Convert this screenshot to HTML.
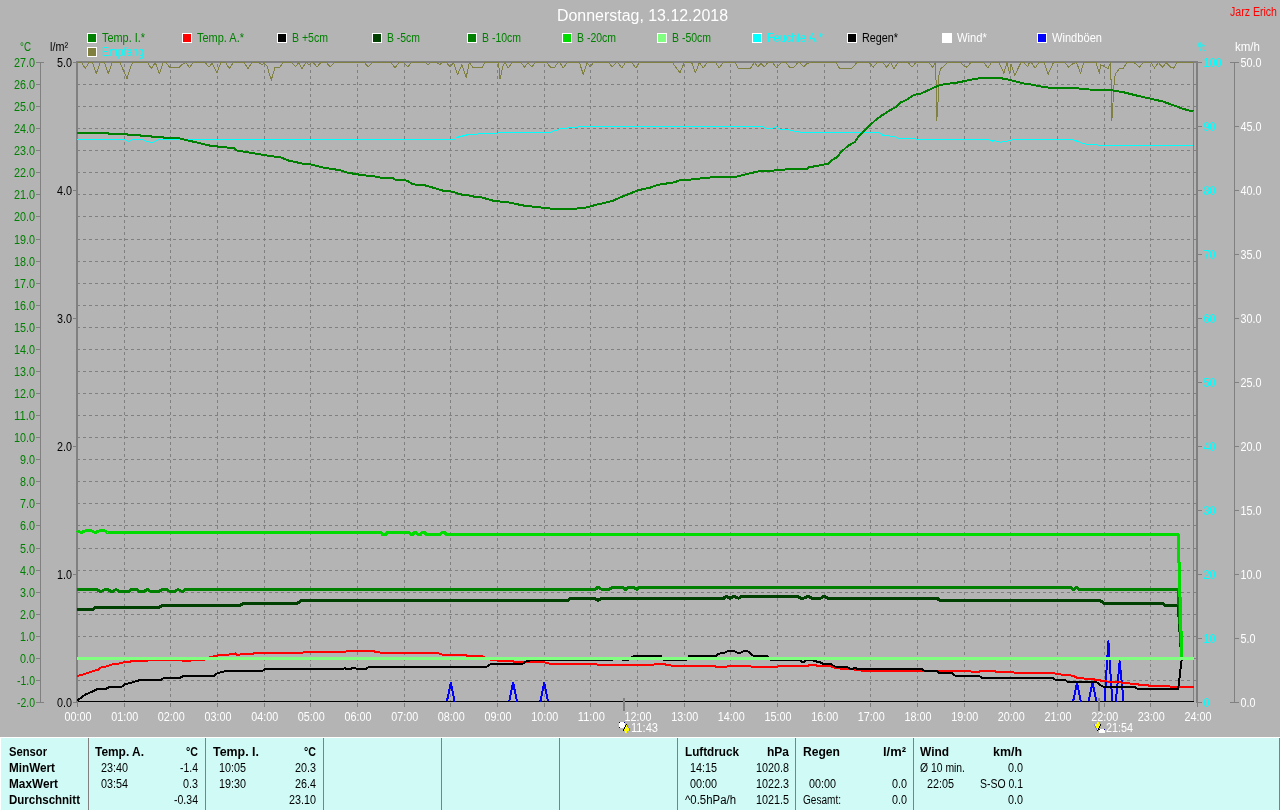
<!DOCTYPE html>
<html lang="de"><head><meta charset="utf-8"><title>Donnerstag, 13.12.2018</title>
<style>html,body{margin:0;padding:0;background:#b4b4b4;overflow:hidden}svg{display:block;will-change:transform}text{font-family:"Liberation Sans",sans-serif;font-size:12px}</style>
</head><body>
<svg width="1280" height="810" viewBox="0 0 1280 810">
<rect x="0" y="0" width="1280" height="810" fill="#b4b4b4"/>
<text x="557" y="21" fill="#ffffff" textLength="171" lengthAdjust="spacingAndGlyphs" style="font-size:16px">Donnerstag, 13.12.2018</text>
<text x="1230" y="16" fill="#ff0000" textLength="47" lengthAdjust="spacingAndGlyphs">Jarz Erich</text>
<g shape-rendering="crispEdges">
<rect x="87" y="33" width="10" height="10" fill="#ffffff"/>
<rect x="88" y="34" width="8" height="8" fill="#008000"/>
<rect x="182" y="33" width="10" height="10" fill="#ffffff"/>
<rect x="183" y="34" width="8" height="8" fill="#ff0000"/>
<rect x="277" y="33" width="10" height="10" fill="#ffffff"/>
<rect x="278" y="34" width="8" height="8" fill="#000000"/>
<rect x="372" y="33" width="10" height="10" fill="#ffffff"/>
<rect x="373" y="34" width="8" height="8" fill="#004000"/>
<rect x="467" y="33" width="10" height="10" fill="#ffffff"/>
<rect x="468" y="34" width="8" height="8" fill="#008000"/>
<rect x="562" y="33" width="10" height="10" fill="#ffffff"/>
<rect x="563" y="34" width="8" height="8" fill="#00dc00"/>
<rect x="657" y="33" width="10" height="10" fill="#ffffff"/>
<rect x="658" y="34" width="8" height="8" fill="#80ff80"/>
<rect x="752" y="33" width="10" height="10" fill="#ffffff"/>
<rect x="753" y="34" width="8" height="8" fill="#00ffff"/>
<rect x="847" y="33" width="10" height="10" fill="#ffffff"/>
<rect x="848" y="34" width="8" height="8" fill="#000000"/>
<rect x="942" y="33" width="10" height="10" fill="#ffffff"/>
<rect x="943" y="34" width="8" height="8" fill="#ffffff"/>
<rect x="1037" y="33" width="10" height="10" fill="#ffffff"/>
<rect x="1038" y="34" width="8" height="8" fill="#0000ff"/>
<rect x="87" y="47" width="10" height="10" fill="#ffffff"/>
<rect x="88" y="48" width="8" height="8" fill="#808040"/>
</g>
<text x="102" y="42" fill="#008000" textLength="43" lengthAdjust="spacingAndGlyphs">Temp. I.*</text>
<text x="197" y="42" fill="#008000" textLength="47" lengthAdjust="spacingAndGlyphs">Temp. A.*</text>
<text x="292" y="42" fill="#008000" textLength="36" lengthAdjust="spacingAndGlyphs">B +5cm</text>
<text x="387" y="42" fill="#008000" textLength="33" lengthAdjust="spacingAndGlyphs">B -5cm</text>
<text x="482" y="42" fill="#008000" textLength="39" lengthAdjust="spacingAndGlyphs">B -10cm</text>
<text x="577" y="42" fill="#008000" textLength="39" lengthAdjust="spacingAndGlyphs">B -20cm</text>
<text x="672" y="42" fill="#008000" textLength="39" lengthAdjust="spacingAndGlyphs">B -50cm</text>
<text x="767" y="42" fill="#00ffff" textLength="56" lengthAdjust="spacingAndGlyphs">Feuchte A.*</text>
<text x="862" y="42" fill="#000000" textLength="36" lengthAdjust="spacingAndGlyphs">Regen*</text>
<text x="957" y="42" fill="#ffffff" textLength="30" lengthAdjust="spacingAndGlyphs">Wind*</text>
<text x="1052" y="42" fill="#ffffff" textLength="50" lengthAdjust="spacingAndGlyphs">Windböen</text>
<text x="102" y="56" fill="#00ffff" textLength="42" lengthAdjust="spacingAndGlyphs">Empfang</text>
<text x="20" y="51" fill="#008000" textLength="11" lengthAdjust="spacingAndGlyphs">°C</text>
<text x="50" y="51" fill="#000000" textLength="18" lengthAdjust="spacingAndGlyphs">l/m²</text>
<text x="1198" y="51" fill="#00ffff" textLength="8" lengthAdjust="spacingAndGlyphs">%</text>
<text x="1235" y="51" fill="#ffffff" textLength="25" lengthAdjust="spacingAndGlyphs">km/h</text>
<g shape-rendering="crispEdges">
<line x1="77" y1="84.5" x2="1196" y2="84.5" stroke="#808080" stroke-width="1" stroke-dasharray="3 3"/>
<line x1="77" y1="106.5" x2="1196" y2="106.5" stroke="#808080" stroke-width="1" stroke-dasharray="3 3"/>
<line x1="77" y1="128.5" x2="1196" y2="128.5" stroke="#808080" stroke-width="1" stroke-dasharray="3 3"/>
<line x1="77" y1="150.5" x2="1196" y2="150.5" stroke="#808080" stroke-width="1" stroke-dasharray="3 3"/>
<line x1="77" y1="172.5" x2="1196" y2="172.5" stroke="#808080" stroke-width="1" stroke-dasharray="3 3"/>
<line x1="77" y1="194.5" x2="1196" y2="194.5" stroke="#808080" stroke-width="1" stroke-dasharray="3 3"/>
<line x1="77" y1="216.5" x2="1196" y2="216.5" stroke="#808080" stroke-width="1" stroke-dasharray="3 3"/>
<line x1="77" y1="239.5" x2="1196" y2="239.5" stroke="#808080" stroke-width="1" stroke-dasharray="3 3"/>
<line x1="77" y1="261.5" x2="1196" y2="261.5" stroke="#808080" stroke-width="1" stroke-dasharray="3 3"/>
<line x1="77" y1="283.5" x2="1196" y2="283.5" stroke="#808080" stroke-width="1" stroke-dasharray="3 3"/>
<line x1="77" y1="305.5" x2="1196" y2="305.5" stroke="#808080" stroke-width="1" stroke-dasharray="3 3"/>
<line x1="77" y1="327.5" x2="1196" y2="327.5" stroke="#808080" stroke-width="1" stroke-dasharray="3 3"/>
<line x1="77" y1="349.5" x2="1196" y2="349.5" stroke="#808080" stroke-width="1" stroke-dasharray="3 3"/>
<line x1="77" y1="371.5" x2="1196" y2="371.5" stroke="#808080" stroke-width="1" stroke-dasharray="3 3"/>
<line x1="77" y1="393.5" x2="1196" y2="393.5" stroke="#808080" stroke-width="1" stroke-dasharray="3 3"/>
<line x1="77" y1="415.5" x2="1196" y2="415.5" stroke="#808080" stroke-width="1" stroke-dasharray="3 3"/>
<line x1="77" y1="437.5" x2="1196" y2="437.5" stroke="#808080" stroke-width="1" stroke-dasharray="3 3"/>
<line x1="77" y1="459.5" x2="1196" y2="459.5" stroke="#808080" stroke-width="1" stroke-dasharray="3 3"/>
<line x1="77" y1="481.5" x2="1196" y2="481.5" stroke="#808080" stroke-width="1" stroke-dasharray="3 3"/>
<line x1="77" y1="503.5" x2="1196" y2="503.5" stroke="#808080" stroke-width="1" stroke-dasharray="3 3"/>
<line x1="77" y1="525.5" x2="1196" y2="525.5" stroke="#808080" stroke-width="1" stroke-dasharray="3 3"/>
<line x1="77" y1="548.5" x2="1196" y2="548.5" stroke="#808080" stroke-width="1" stroke-dasharray="3 3"/>
<line x1="77" y1="570.5" x2="1196" y2="570.5" stroke="#808080" stroke-width="1" stroke-dasharray="3 3"/>
<line x1="77" y1="592.5" x2="1196" y2="592.5" stroke="#808080" stroke-width="1" stroke-dasharray="3 3"/>
<line x1="77" y1="614.5" x2="1196" y2="614.5" stroke="#808080" stroke-width="1" stroke-dasharray="3 3"/>
<line x1="77" y1="636.5" x2="1196" y2="636.5" stroke="#808080" stroke-width="1" stroke-dasharray="3 3"/>
<line x1="77" y1="658.5" x2="1196" y2="658.5" stroke="#808080" stroke-width="1" stroke-dasharray="3 3"/>
<line x1="77" y1="680.5" x2="1196" y2="680.5" stroke="#808080" stroke-width="1" stroke-dasharray="3 3"/>
<line x1="124.5" y1="64" x2="124.5" y2="701" stroke="#808080" stroke-width="1" stroke-dasharray="3 3"/>
<rect x="124" y="703" width="1" height="4" fill="#808080"/>
<line x1="170.5" y1="64" x2="170.5" y2="701" stroke="#808080" stroke-width="1" stroke-dasharray="3 3"/>
<rect x="170" y="703" width="1" height="4" fill="#808080"/>
<line x1="217.5" y1="64" x2="217.5" y2="701" stroke="#808080" stroke-width="1" stroke-dasharray="3 3"/>
<rect x="217" y="703" width="1" height="4" fill="#808080"/>
<line x1="264.5" y1="64" x2="264.5" y2="701" stroke="#808080" stroke-width="1" stroke-dasharray="3 3"/>
<rect x="264" y="703" width="1" height="4" fill="#808080"/>
<line x1="310.5" y1="64" x2="310.5" y2="701" stroke="#808080" stroke-width="1" stroke-dasharray="3 3"/>
<rect x="310" y="703" width="1" height="4" fill="#808080"/>
<line x1="357.5" y1="64" x2="357.5" y2="701" stroke="#808080" stroke-width="1" stroke-dasharray="3 3"/>
<rect x="357" y="703" width="1" height="4" fill="#808080"/>
<line x1="404.5" y1="64" x2="404.5" y2="701" stroke="#808080" stroke-width="1" stroke-dasharray="3 3"/>
<rect x="404" y="703" width="1" height="4" fill="#808080"/>
<line x1="450.5" y1="64" x2="450.5" y2="701" stroke="#808080" stroke-width="1" stroke-dasharray="3 3"/>
<rect x="450" y="703" width="1" height="4" fill="#808080"/>
<line x1="497.5" y1="64" x2="497.5" y2="701" stroke="#808080" stroke-width="1" stroke-dasharray="3 3"/>
<rect x="497" y="703" width="1" height="4" fill="#808080"/>
<line x1="544.5" y1="64" x2="544.5" y2="701" stroke="#808080" stroke-width="1" stroke-dasharray="3 3"/>
<rect x="544" y="703" width="1" height="4" fill="#808080"/>
<line x1="590.5" y1="64" x2="590.5" y2="701" stroke="#808080" stroke-width="1" stroke-dasharray="3 3"/>
<rect x="590" y="703" width="1" height="4" fill="#808080"/>
<line x1="637.5" y1="64" x2="637.5" y2="701" stroke="#808080" stroke-width="1" stroke-dasharray="3 3"/>
<rect x="637" y="703" width="1" height="4" fill="#808080"/>
<line x1="684.5" y1="64" x2="684.5" y2="701" stroke="#808080" stroke-width="1" stroke-dasharray="3 3"/>
<rect x="684" y="703" width="1" height="4" fill="#808080"/>
<line x1="730.5" y1="64" x2="730.5" y2="701" stroke="#808080" stroke-width="1" stroke-dasharray="3 3"/>
<rect x="730" y="703" width="1" height="4" fill="#808080"/>
<line x1="777.5" y1="64" x2="777.5" y2="701" stroke="#808080" stroke-width="1" stroke-dasharray="3 3"/>
<rect x="777" y="703" width="1" height="4" fill="#808080"/>
<line x1="824.5" y1="64" x2="824.5" y2="701" stroke="#808080" stroke-width="1" stroke-dasharray="3 3"/>
<rect x="824" y="703" width="1" height="4" fill="#808080"/>
<line x1="870.5" y1="64" x2="870.5" y2="701" stroke="#808080" stroke-width="1" stroke-dasharray="3 3"/>
<rect x="870" y="703" width="1" height="4" fill="#808080"/>
<line x1="917.5" y1="64" x2="917.5" y2="701" stroke="#808080" stroke-width="1" stroke-dasharray="3 3"/>
<rect x="917" y="703" width="1" height="4" fill="#808080"/>
<line x1="964.5" y1="64" x2="964.5" y2="701" stroke="#808080" stroke-width="1" stroke-dasharray="3 3"/>
<rect x="964" y="703" width="1" height="4" fill="#808080"/>
<line x1="1010.5" y1="64" x2="1010.5" y2="701" stroke="#808080" stroke-width="1" stroke-dasharray="3 3"/>
<rect x="1010" y="703" width="1" height="4" fill="#808080"/>
<line x1="1057.5" y1="64" x2="1057.5" y2="701" stroke="#808080" stroke-width="1" stroke-dasharray="3 3"/>
<rect x="1057" y="703" width="1" height="4" fill="#808080"/>
<line x1="1104.5" y1="64" x2="1104.5" y2="701" stroke="#808080" stroke-width="1" stroke-dasharray="3 3"/>
<rect x="1104" y="703" width="1" height="4" fill="#808080"/>
<line x1="1150.5" y1="64" x2="1150.5" y2="701" stroke="#808080" stroke-width="1" stroke-dasharray="3 3"/>
<rect x="1150" y="703" width="1" height="4" fill="#808080"/>
</g>
<g shape-rendering="crispEdges">
<rect x="76" y="61" width="2" height="642" fill="#808080"/>
<rect x="77" y="703" width="1" height="4" fill="#808080"/>
<rect x="76" y="61" width="1122" height="2" fill="#808080"/>
<rect x="1193" y="63" width="1" height="639" fill="#808080"/>
<rect x="78" y="701" width="1116" height="1" fill="#000000"/>
</g>
<g shape-rendering="crispEdges">
<polyline points="77.00,62.50 81.50,62.50 85.30,68.50 89.00,62.50 92.50,62.50 96.30,73.50 100.20,62.50 104.50,62.50 108.30,73.50 112.20,62.50 120.00,62.50 127.00,78.60 131.00,66.00 133.00,62.50 147.50,62.50 151.30,68.50 155.30,62.50 159.40,73.50 163.30,62.50 166.00,62.50 170.00,67.70 179.00,67.70 182.00,64.50 185.60,62.50 189.50,67.50 193.40,62.50 205.00,62.50 209.00,67.00 212.00,63.50 217.00,72.40 221.00,62.50 225.50,62.50 229.40,68.50 233.30,62.50 244.00,62.50 248.00,68.50 252.00,62.50 259.00,62.50 262.00,65.00 264.00,62.50 267.00,66.00 271.25,80.20 275.00,67.25 280.00,67.25 283.00,62.50 291.70,62.50 295.60,67.00 298.50,62.50 302.00,68.50 306.00,62.50 309.00,64.50 312.00,62.50 313.20,62.50 317.00,67.00 320.90,62.50 326.40,62.50 330.30,67.00 334.20,62.50 364.40,62.50 368.30,67.00 372.20,62.50 391.10,62.50 395.00,68.00 398.90,62.50 403.70,62.50 407.60,67.00 411.50,62.50 425.00,62.50 428.00,64.50 431.00,62.50 436.70,62.50 439.70,64.50 442.70,62.50 446.40,62.50 450.30,67.00 453.50,62.50 457.60,74.40 462.00,64.60 466.20,77.20 469.40,62.50 472.70,67.20 482.40,67.20 485.00,62.50 498.50,62.50 500.00,79.30 503.00,66.00 505.00,62.50 508.30,67.90 512.00,62.50 520.60,62.50 524.50,67.00 528.00,62.50 531.60,67.00 535.50,62.50 546.50,62.50 550.40,67.00 554.80,67.00 558.00,62.50 559.50,62.50 563.40,67.90 567.30,62.50 579.40,62.50 583.30,74.40 587.00,62.50 590.40,67.00 593.50,62.50 608.50,62.50 612.40,67.00 616.30,62.50 617.80,62.50 621.70,67.90 625.60,62.50 631.80,62.50 635.70,67.90 639.60,62.50 672.40,62.50 680.00,72.80 684.30,62.50 691.60,62.50 695.50,72.80 699.40,62.50 703.30,67.90 707.20,62.50 715.40,62.50 719.30,67.90 723.20,62.50 735.00,62.50 738.30,68.50 750.20,68.50 754.50,62.50 757.70,66.80 761.00,63.50 764.20,66.80 768.00,62.50 772.60,62.50 776.50,67.90 781.50,62.50 786.00,62.50 790.00,67.90 794.00,67.00 798.00,62.50 800.00,62.50 803.50,66.80 807.00,63.50 810.60,62.50 836.00,62.50 839.70,68.50 851.60,68.50 857.00,62.50 869.30,62.50 873.20,67.20 877.10,62.50 882.70,62.50 886.60,67.20 890.50,62.50 894.10,68.50 898.00,62.50 908.10,62.50 912.00,67.20 915.90,62.50 928.70,62.50 932.60,67.20 935.80,62.50 936.50,120.40 937.50,113.75 938.10,100.00 939.00,75.00 940.60,69.00 943.00,66.80 947.70,62.50 961.00,62.50 964.00,66.00 967.10,67.20 971.00,62.50 983.80,62.50 987.70,67.90 991.60,62.50 999.00,62.50 1003.90,73.30 1007.00,62.50 1009.70,73.30 1011.00,64.00 1014.70,75.40 1021.00,62.50 1024.00,62.50 1027.60,66.80 1029.40,62.50 1031.20,62.50 1035.10,68.00 1039.00,62.50 1044.20,62.50 1048.10,74.40 1053.50,62.50 1064.70,62.50 1068.60,67.20 1072.50,64.00 1076.50,62.50 1080.50,73.30 1083.70,62.50 1096.00,62.50 1099.50,73.30 1100.50,65.00 1103.50,66.00 1108.00,68.50 1110.80,62.50 1111.50,120.40 1112.50,114.80 1113.00,102.70 1114.30,79.30 1115.60,73.70 1119.40,68.50 1123.30,68.10 1126.80,62.50 1134.10,62.50 1139.30,67.20 1143.20,62.50 1151.00,62.50 1154.50,68.10 1158.30,62.50 1162.70,67.20 1166.10,62.50 1170.90,67.20 1173.90,68.10 1176.90,62.50 1193.00,62.50" fill="none" stroke="#808040" stroke-width="1" stroke-linejoin="round"/>
<polyline points="77.00,139.50 124.00,139.50 128.00,141.50 132.00,139.50 143.00,139.50 147.00,141.50 151.00,142.50 155.00,141.50 159.00,139.50 454.50,139.50 456.50,137.50 467.30,134.80 480.20,133.75 506.00,132.70 550.40,132.50 560.00,128.80 579.60,126.80 600.00,126.50 763.00,126.50 766.30,129.00 775.00,127.70 776.50,126.80 780.40,129.40 789.00,129.90 793.30,131.20 802.00,132.50 878.60,132.50 882.90,135.30 892.60,136.30 899.10,138.50 914.20,138.50 917.50,139.50 987.70,139.50 992.00,141.30 994.10,140.20 999.50,142.20 1009.30,140.70 1013.60,139.50 1072.90,139.50 1078.30,141.70 1087.00,144.50 1096.70,144.50 1100.00,145.50 1193.00,145.50" fill="none" stroke="#00ffff" stroke-width="1" stroke-linejoin="round"/>
<polyline points="77.00,133.00 108.00,133.00 109.00,134.00 127.00,134.00 128.00,135.00 140.00,135.00 141.00,136.00 151.00,136.00 152.00,137.00 163.00,137.00 164.00,138.00 179.00,138.30 210.60,145.80 234.00,148.20 237.00,150.50 270.00,156.00 280.30,157.25 288.00,160.40 302.00,163.50 311.50,164.60 322.50,167.40 341.00,170.40 346.00,172.40 360.00,174.75 378.75,177.00 380.00,177.60 392.50,177.80 395.60,179.90 404.20,179.90 408.10,181.10 411.25,183.40 415.90,184.80 423.75,185.00 427.70,186.20 431.60,187.30 436.25,188.50 439.40,189.70 444.00,190.90 450.30,191.25 455.00,192.40 458.10,193.75 462.80,194.80 469.00,195.50 474.50,196.70 480.00,196.90 493.20,200.70 508.30,202.40 523.40,205.50 536.40,207.00 551.50,208.70 575.30,208.70 586.00,207.60 596.90,204.60 612.00,201.10 622.80,196.40 637.90,190.30 650.00,187.70 657.30,184.90 674.60,182.30 681.00,179.80 698.30,179.30 701.60,177.80 737.20,176.50 748.00,173.70 759.90,171.10 773.90,170.50 778.20,169.60 793.30,169.40 800.00,169.40 807.50,168.75 809.40,166.90 816.25,166.25 820.60,165.00 828.10,164.00 831.25,160.60 837.50,156.90 840.00,153.10 847.50,146.25 855.00,141.90 858.75,136.25 865.00,130.00 875.00,120.60 882.50,115.00 892.50,108.75 896.25,106.90 899.40,103.10 907.50,99.40 913.75,95.00 920.60,93.75 930.00,89.40 937.50,86.00 945.00,84.00 953.75,83.10 960.00,82.10 968.20,80.20 981.20,78.00 989.80,77.60 998.50,77.80 1007.10,79.30 1015.70,81.50 1024.40,83.60 1028.60,84.10 1041.60,86.70 1052.40,88.00 1078.30,88.40 1089.10,89.50 1110.70,90.10 1123.70,92.30 1136.60,95.50 1149.60,98.50 1162.50,101.40 1173.30,105.20 1182.00,108.50 1188.50,110.40 1193.50,111.10" fill="none" stroke="#008000" stroke-width="2" stroke-linejoin="round"/>
<polyline points="446.91,701.50 450.80,682.50 454.69,701.50" fill="none" stroke="#0000ff" stroke-width="2" stroke-linejoin="round" stroke-linejoin="miter"/>
<polyline points="509.21,701.50 513.10,682.50 516.99,701.50" fill="none" stroke="#0000ff" stroke-width="2" stroke-linejoin="round" stroke-linejoin="miter"/>
<polyline points="540.31,701.50 544.20,682.50 548.09,701.50" fill="none" stroke="#0000ff" stroke-width="2" stroke-linejoin="round" stroke-linejoin="miter"/>
<polyline points="1073.11,701.50 1077.00,682.50 1080.89,701.50" fill="none" stroke="#0000ff" stroke-width="2" stroke-linejoin="round" stroke-linejoin="miter"/>
<polyline points="1088.61,701.50 1092.50,682.50 1096.39,701.50" fill="none" stroke="#0000ff" stroke-width="2" stroke-linejoin="round" stroke-linejoin="miter"/>
<polyline points="1104.51,701.50 1108.40,641.20 1112.29,701.50" fill="none" stroke="#0000ff" stroke-width="2" stroke-linejoin="round" stroke-linejoin="miter"/>
<polyline points="1115.81,701.50 1119.70,661.30 1123.59,701.50" fill="none" stroke="#0000ff" stroke-width="2" stroke-linejoin="round" stroke-linejoin="miter"/>
<polyline points="77.00,676.10 85.60,673.75 93.40,671.00 98.10,669.80 101.25,667.20 107.50,666.25 110.60,664.70 116.90,664.00 123.00,662.50 132.50,661.25 143.40,660.60 157.50,660.30 182.00,660.30 184.00,661.25 189.50,661.25 191.00,660.40 202.80,660.40 206.00,658.50 212.20,656.60 220.00,655.00 234.00,654.20 235.50,653.50 237.00,654.80 246.60,653.90 260.60,653.10 302.40,653.10 304.00,651.80 345.60,651.80 347.30,650.60 372.40,650.60 375.00,651.80 379.00,651.80 381.00,653.10 438.00,653.10 443.20,654.90 465.60,654.90 467.30,655.90 482.00,656.30 487.00,658.50 493.20,660.40 512.20,660.90 514.00,661.80 543.30,662.10 552.00,664.20 596.00,664.20 598.70,665.10 653.00,665.10 654.70,663.90 664.20,663.90 666.00,664.70 672.80,665.90 714.30,665.90 716.00,666.80 726.40,666.80 728.20,665.90 749.80,665.90 751.50,666.80 777.40,666.80 779.20,665.90 807.70,665.90 809.40,665.10 815.50,665.10 817.20,665.90 830.20,665.90 831.90,667.10 840.00,668.50 847.30,668.50 862.80,670.80 970.00,670.80 971.70,672.00 978.70,672.00 980.40,670.80 994.20,670.80 996.00,672.00 1013.20,672.00 1015.00,673.20 1052.80,673.20 1061.50,674.60 1073.60,675.80 1077.00,678.00 1092.60,679.20 1106.40,681.50 1123.70,682.70 1137.50,684.40 1151.40,685.80 1165.20,686.20 1178.20,687.00 1193.70,687.00" fill="none" stroke="#ff0000" stroke-width="2" stroke-linejoin="round"/>
<polyline points="77.00,700.60 85.60,694.40 90.30,692.50 97.30,689.00 106.00,689.00 109.00,687.00 121.50,687.00 124.70,684.40 132.50,682.30 140.30,680.00 160.60,680.00 163.75,678.00 179.40,678.00 183.30,676.10 213.75,676.10 217.70,673.00 226.25,671.10 262.20,671.10 265.30,669.00 343.00,669.00 344.70,668.00 346.40,669.00 350.75,669.00 352.50,668.00 355.00,668.00 356.80,669.00 365.40,669.00 368.90,667.00 486.30,667.00 490.60,664.20 521.70,664.20 526.00,661.60 530.40,660.40 611.60,660.40 614.00,658.50 621.00,658.50 622.90,660.40 628.00,660.40 630.00,658.50 634.00,655.90 660.70,655.90 662.50,658.50 665.00,660.40 685.80,660.40 687.50,658.50 689.30,655.90 716.00,655.90 718.70,653.80 724.70,652.60 729.00,650.60 734.20,650.90 737.70,653.00 741.10,652.60 744.60,650.60 748.00,651.60 753.20,655.60 767.00,655.90 769.00,658.50 771.40,660.40 799.90,660.40 801.60,661.60 804.20,661.60 806.00,660.40 812.90,660.40 815.50,661.30 819.80,662.10 823.20,663.90 831.00,663.90 834.50,666.50 840.00,667.10 847.30,667.10 849.90,668.90 853.30,668.90 854.00,668.00 855.80,668.00 856.80,669.00 921.60,669.00 924.20,670.60 936.30,670.60 938.90,672.90 951.90,672.90 955.30,675.80 978.70,675.80 982.10,678.00 1052.80,678.00 1055.40,679.80 1065.00,679.80 1067.50,681.80 1096.00,681.80 1100.30,685.00 1103.80,687.00 1135.00,687.00 1137.50,688.90 1178.20,688.90 1181.80,658.50" fill="none" stroke="#000000" stroke-width="2" stroke-linejoin="round"/>
<polyline points="77.00,609.30 93.00,609.30 96.00,607.20 159.50,607.20 162.50,605.20 240.50,605.20 243.50,603.00 298.00,603.00 301.00,600.60 568.00,600.60 570.50,598.30 595.00,598.30 597.80,600.60 601.20,598.30 723.80,598.30 725.90,596.30 729.90,598.30 734.20,596.30 738.50,598.30 742.00,596.30 797.30,596.30 800.80,598.30 803.40,598.30 807.70,596.30 812.00,598.30 820.60,598.30 824.00,596.30 828.40,598.30 937.20,598.30 939.80,600.60 1100.40,600.60 1103.80,603.20 1162.60,603.20 1165.20,605.40 1178.20,605.40 1181.80,658.50" fill="none" stroke="#004000" stroke-width="3" stroke-linejoin="round"/>
<polyline points="77.00,589.50 97.00,589.50 100.50,591.70 105.00,589.50 108.00,589.50 111.90,591.70 116.00,589.50 120.00,591.70 128.60,591.70 131.70,589.50 136.40,589.50 139.50,591.70 143.40,591.70 147.30,589.50 151.25,591.70 159.00,591.70 162.00,589.50 166.90,589.50 170.00,591.70 173.90,591.70 177.80,589.50 182.50,591.70 185.60,589.50 595.20,589.50 597.80,587.30 602.00,589.50 609.00,589.50 612.50,587.30 622.90,587.30 625.50,589.50 628.00,587.30 634.00,587.30 636.70,589.50 640.00,587.30 1070.10,587.30 1073.60,589.50 1076.20,587.30 1079.60,589.50 1178.20,589.50 1181.80,658.50" fill="none" stroke="#008000" stroke-width="3" stroke-linejoin="round"/>
<polyline points="77.00,530.50 81.00,532.50 85.00,531.00 88.00,530.50 92.00,531.00 95.00,532.50 99.00,531.00 102.80,530.50 105.00,531.00 107.50,532.50 380.90,532.50 382.50,534.50 385.60,534.50 387.60,532.50 409.00,532.50 410.60,534.50 412.60,534.50 414.50,532.50 416.00,532.50 418.00,534.50 420.40,534.50 422.30,532.50 424.70,532.50 426.25,534.50 440.30,534.50 442.30,532.50 444.60,532.50 446.20,534.50 1178.20,534.50 1181.80,658.50" fill="none" stroke="#00dc00" stroke-width="3" stroke-linejoin="round"/>
<polyline points="77.00,658.50 1194.00,658.50" fill="none" stroke="#80ff80" stroke-width="3" stroke-linejoin="round"/>
</g>
<g shape-rendering="crispEdges">
<rect x="40" y="62" width="1" height="641" fill="#808080"/>
<rect x="36" y="62" width="8" height="1" fill="#808080"/>
<rect x="36" y="84" width="4" height="1" fill="#808080"/>
<rect x="36" y="106" width="4" height="1" fill="#808080"/>
<rect x="36" y="128" width="4" height="1" fill="#808080"/>
<rect x="36" y="150" width="4" height="1" fill="#808080"/>
<rect x="36" y="172" width="4" height="1" fill="#808080"/>
<rect x="36" y="194" width="4" height="1" fill="#808080"/>
<rect x="36" y="216" width="4" height="1" fill="#808080"/>
<rect x="36" y="239" width="4" height="1" fill="#808080"/>
<rect x="36" y="261" width="4" height="1" fill="#808080"/>
<rect x="36" y="283" width="4" height="1" fill="#808080"/>
<rect x="36" y="305" width="4" height="1" fill="#808080"/>
<rect x="36" y="327" width="4" height="1" fill="#808080"/>
<rect x="36" y="349" width="4" height="1" fill="#808080"/>
<rect x="36" y="371" width="4" height="1" fill="#808080"/>
<rect x="36" y="393" width="4" height="1" fill="#808080"/>
<rect x="36" y="415" width="4" height="1" fill="#808080"/>
<rect x="36" y="437" width="4" height="1" fill="#808080"/>
<rect x="36" y="459" width="4" height="1" fill="#808080"/>
<rect x="36" y="481" width="4" height="1" fill="#808080"/>
<rect x="36" y="503" width="4" height="1" fill="#808080"/>
<rect x="36" y="525" width="4" height="1" fill="#808080"/>
<rect x="36" y="548" width="4" height="1" fill="#808080"/>
<rect x="36" y="570" width="4" height="1" fill="#808080"/>
<rect x="36" y="592" width="4" height="1" fill="#808080"/>
<rect x="36" y="614" width="4" height="1" fill="#808080"/>
<rect x="36" y="636" width="4" height="1" fill="#808080"/>
<rect x="36" y="658" width="4" height="1" fill="#808080"/>
<rect x="36" y="680" width="4" height="1" fill="#808080"/>
<rect x="36" y="702" width="8" height="1" fill="#808080"/>
<rect x="73" y="62" width="3" height="1" fill="#808080"/>
<rect x="73" y="190" width="3" height="1" fill="#808080"/>
<rect x="73" y="318" width="3" height="1" fill="#808080"/>
<rect x="73" y="446" width="3" height="1" fill="#808080"/>
<rect x="73" y="574" width="3" height="1" fill="#808080"/>
<rect x="73" y="702" width="3" height="1" fill="#808080"/>
<rect x="1196" y="61" width="2" height="642" fill="#808080"/>
<rect x="1197" y="703" width="1" height="4" fill="#808080"/>
<rect x="1198" y="62" width="4" height="1" fill="#808080"/>
<rect x="1198" y="126" width="4" height="1" fill="#808080"/>
<rect x="1198" y="190" width="4" height="1" fill="#808080"/>
<rect x="1198" y="254" width="4" height="1" fill="#808080"/>
<rect x="1198" y="318" width="4" height="1" fill="#808080"/>
<rect x="1198" y="382" width="4" height="1" fill="#808080"/>
<rect x="1198" y="446" width="4" height="1" fill="#808080"/>
<rect x="1198" y="510" width="4" height="1" fill="#808080"/>
<rect x="1198" y="574" width="4" height="1" fill="#808080"/>
<rect x="1198" y="638" width="4" height="1" fill="#808080"/>
<rect x="1198" y="702" width="4" height="1" fill="#808080"/>
<rect x="1234" y="62" width="1" height="641" fill="#808080"/>
<rect x="1230" y="62" width="9" height="1" fill="#808080"/>
<rect x="1235" y="126" width="4" height="1" fill="#808080"/>
<rect x="1235" y="190" width="4" height="1" fill="#808080"/>
<rect x="1235" y="254" width="4" height="1" fill="#808080"/>
<rect x="1235" y="318" width="4" height="1" fill="#808080"/>
<rect x="1235" y="382" width="4" height="1" fill="#808080"/>
<rect x="1235" y="446" width="4" height="1" fill="#808080"/>
<rect x="1235" y="510" width="4" height="1" fill="#808080"/>
<rect x="1235" y="574" width="4" height="1" fill="#808080"/>
<rect x="1235" y="638" width="4" height="1" fill="#808080"/>
<rect x="1230" y="702" width="9" height="1" fill="#808080"/>
<rect x="623" y="698" width="2" height="13" fill="#808080"/>
<rect x="1098" y="698" width="2" height="13" fill="#808080"/>
</g>
<text x="35" y="67" fill="#008000" text-anchor="end" textLength="21" lengthAdjust="spacingAndGlyphs">27.0</text>
<text x="35" y="89" fill="#008000" text-anchor="end" textLength="21" lengthAdjust="spacingAndGlyphs">26.0</text>
<text x="35" y="111" fill="#008000" text-anchor="end" textLength="21" lengthAdjust="spacingAndGlyphs">25.0</text>
<text x="35" y="133" fill="#008000" text-anchor="end" textLength="21" lengthAdjust="spacingAndGlyphs">24.0</text>
<text x="35" y="155" fill="#008000" text-anchor="end" textLength="21" lengthAdjust="spacingAndGlyphs">23.0</text>
<text x="35" y="177" fill="#008000" text-anchor="end" textLength="21" lengthAdjust="spacingAndGlyphs">22.0</text>
<text x="35" y="199" fill="#008000" text-anchor="end" textLength="21" lengthAdjust="spacingAndGlyphs">21.0</text>
<text x="35" y="221" fill="#008000" text-anchor="end" textLength="21" lengthAdjust="spacingAndGlyphs">20.0</text>
<text x="35" y="244" fill="#008000" text-anchor="end" textLength="21" lengthAdjust="spacingAndGlyphs">19.0</text>
<text x="35" y="266" fill="#008000" text-anchor="end" textLength="21" lengthAdjust="spacingAndGlyphs">18.0</text>
<text x="35" y="288" fill="#008000" text-anchor="end" textLength="21" lengthAdjust="spacingAndGlyphs">17.0</text>
<text x="35" y="310" fill="#008000" text-anchor="end" textLength="21" lengthAdjust="spacingAndGlyphs">16.0</text>
<text x="35" y="332" fill="#008000" text-anchor="end" textLength="21" lengthAdjust="spacingAndGlyphs">15.0</text>
<text x="35" y="354" fill="#008000" text-anchor="end" textLength="21" lengthAdjust="spacingAndGlyphs">14.0</text>
<text x="35" y="376" fill="#008000" text-anchor="end" textLength="21" lengthAdjust="spacingAndGlyphs">13.0</text>
<text x="35" y="398" fill="#008000" text-anchor="end" textLength="21" lengthAdjust="spacingAndGlyphs">12.0</text>
<text x="35" y="420" fill="#008000" text-anchor="end" textLength="21" lengthAdjust="spacingAndGlyphs">11.0</text>
<text x="35" y="442" fill="#008000" text-anchor="end" textLength="21" lengthAdjust="spacingAndGlyphs">10.0</text>
<text x="35" y="464" fill="#008000" text-anchor="end" textLength="15" lengthAdjust="spacingAndGlyphs">9.0</text>
<text x="35" y="486" fill="#008000" text-anchor="end" textLength="15" lengthAdjust="spacingAndGlyphs">8.0</text>
<text x="35" y="508" fill="#008000" text-anchor="end" textLength="15" lengthAdjust="spacingAndGlyphs">7.0</text>
<text x="35" y="530" fill="#008000" text-anchor="end" textLength="15" lengthAdjust="spacingAndGlyphs">6.0</text>
<text x="35" y="553" fill="#008000" text-anchor="end" textLength="15" lengthAdjust="spacingAndGlyphs">5.0</text>
<text x="35" y="575" fill="#008000" text-anchor="end" textLength="15" lengthAdjust="spacingAndGlyphs">4.0</text>
<text x="35" y="597" fill="#008000" text-anchor="end" textLength="15" lengthAdjust="spacingAndGlyphs">3.0</text>
<text x="35" y="619" fill="#008000" text-anchor="end" textLength="15" lengthAdjust="spacingAndGlyphs">2.0</text>
<text x="35" y="641" fill="#008000" text-anchor="end" textLength="15" lengthAdjust="spacingAndGlyphs">1.0</text>
<text x="35" y="663" fill="#008000" text-anchor="end" textLength="15" lengthAdjust="spacingAndGlyphs">0.0</text>
<text x="35" y="685" fill="#008000" text-anchor="end" textLength="18" lengthAdjust="spacingAndGlyphs">-1.0</text>
<text x="35" y="707" fill="#008000" text-anchor="end" textLength="18" lengthAdjust="spacingAndGlyphs">-2.0</text>
<text x="72" y="67" fill="#000000" text-anchor="end" textLength="15" lengthAdjust="spacingAndGlyphs">5.0</text>
<text x="72" y="195" fill="#000000" text-anchor="end" textLength="15" lengthAdjust="spacingAndGlyphs">4.0</text>
<text x="72" y="323" fill="#000000" text-anchor="end" textLength="15" lengthAdjust="spacingAndGlyphs">3.0</text>
<text x="72" y="451" fill="#000000" text-anchor="end" textLength="15" lengthAdjust="spacingAndGlyphs">2.0</text>
<text x="72" y="579" fill="#000000" text-anchor="end" textLength="15" lengthAdjust="spacingAndGlyphs">1.0</text>
<text x="72" y="707" fill="#000000" text-anchor="end" textLength="15" lengthAdjust="spacingAndGlyphs">0.0</text>
<text x="1203.5" y="67" fill="#00ffff" textLength="18" lengthAdjust="spacingAndGlyphs">100</text>
<text x="1203.5" y="131" fill="#00ffff" textLength="12" lengthAdjust="spacingAndGlyphs">90</text>
<text x="1203.5" y="195" fill="#00ffff" textLength="12" lengthAdjust="spacingAndGlyphs">80</text>
<text x="1203.5" y="259" fill="#00ffff" textLength="12" lengthAdjust="spacingAndGlyphs">70</text>
<text x="1203.5" y="323" fill="#00ffff" textLength="12" lengthAdjust="spacingAndGlyphs">60</text>
<text x="1203.5" y="387" fill="#00ffff" textLength="12" lengthAdjust="spacingAndGlyphs">50</text>
<text x="1203.5" y="451" fill="#00ffff" textLength="12" lengthAdjust="spacingAndGlyphs">40</text>
<text x="1203.5" y="515" fill="#00ffff" textLength="12" lengthAdjust="spacingAndGlyphs">30</text>
<text x="1203.5" y="579" fill="#00ffff" textLength="12" lengthAdjust="spacingAndGlyphs">20</text>
<text x="1203.5" y="643" fill="#00ffff" textLength="12" lengthAdjust="spacingAndGlyphs">10</text>
<text x="1203.5" y="707" fill="#00ffff" textLength="6" lengthAdjust="spacingAndGlyphs">0</text>
<text x="1240.5" y="67" fill="#ffffff" textLength="21" lengthAdjust="spacingAndGlyphs">50.0</text>
<text x="1240.5" y="131" fill="#ffffff" textLength="21" lengthAdjust="spacingAndGlyphs">45.0</text>
<text x="1240.5" y="195" fill="#ffffff" textLength="21" lengthAdjust="spacingAndGlyphs">40.0</text>
<text x="1240.5" y="259" fill="#ffffff" textLength="21" lengthAdjust="spacingAndGlyphs">35.0</text>
<text x="1240.5" y="323" fill="#ffffff" textLength="21" lengthAdjust="spacingAndGlyphs">30.0</text>
<text x="1240.5" y="387" fill="#ffffff" textLength="21" lengthAdjust="spacingAndGlyphs">25.0</text>
<text x="1240.5" y="451" fill="#ffffff" textLength="21" lengthAdjust="spacingAndGlyphs">20.0</text>
<text x="1240.5" y="515" fill="#ffffff" textLength="21" lengthAdjust="spacingAndGlyphs">15.0</text>
<text x="1240.5" y="579" fill="#ffffff" textLength="21" lengthAdjust="spacingAndGlyphs">10.0</text>
<text x="1240.5" y="643" fill="#ffffff" textLength="15" lengthAdjust="spacingAndGlyphs">5.0</text>
<text x="1240.5" y="707" fill="#ffffff" textLength="15" lengthAdjust="spacingAndGlyphs">0.0</text>
<text x="78.0" y="721" fill="#ffffff" text-anchor="middle" textLength="27" lengthAdjust="spacingAndGlyphs">00:00</text>
<text x="124.66666666666666" y="721" fill="#ffffff" text-anchor="middle" textLength="27" lengthAdjust="spacingAndGlyphs">01:00</text>
<text x="171.33333333333331" y="721" fill="#ffffff" text-anchor="middle" textLength="27" lengthAdjust="spacingAndGlyphs">02:00</text>
<text x="218.0" y="721" fill="#ffffff" text-anchor="middle" textLength="27" lengthAdjust="spacingAndGlyphs">03:00</text>
<text x="264.66666666666663" y="721" fill="#ffffff" text-anchor="middle" textLength="27" lengthAdjust="spacingAndGlyphs">04:00</text>
<text x="311.3333333333333" y="721" fill="#ffffff" text-anchor="middle" textLength="27" lengthAdjust="spacingAndGlyphs">05:00</text>
<text x="358.0" y="721" fill="#ffffff" text-anchor="middle" textLength="27" lengthAdjust="spacingAndGlyphs">06:00</text>
<text x="404.66666666666663" y="721" fill="#ffffff" text-anchor="middle" textLength="27" lengthAdjust="spacingAndGlyphs">07:00</text>
<text x="451.3333333333333" y="721" fill="#ffffff" text-anchor="middle" textLength="27" lengthAdjust="spacingAndGlyphs">08:00</text>
<text x="498.0" y="721" fill="#ffffff" text-anchor="middle" textLength="27" lengthAdjust="spacingAndGlyphs">09:00</text>
<text x="544.6666666666666" y="721" fill="#ffffff" text-anchor="middle" textLength="27" lengthAdjust="spacingAndGlyphs">10:00</text>
<text x="591.3333333333333" y="721" fill="#ffffff" text-anchor="middle" textLength="27" lengthAdjust="spacingAndGlyphs">11:00</text>
<text x="638.0" y="721" fill="#ffffff" text-anchor="middle" textLength="27" lengthAdjust="spacingAndGlyphs">12:00</text>
<text x="684.6666666666666" y="721" fill="#ffffff" text-anchor="middle" textLength="27" lengthAdjust="spacingAndGlyphs">13:00</text>
<text x="731.3333333333333" y="721" fill="#ffffff" text-anchor="middle" textLength="27" lengthAdjust="spacingAndGlyphs">14:00</text>
<text x="778.0" y="721" fill="#ffffff" text-anchor="middle" textLength="27" lengthAdjust="spacingAndGlyphs">15:00</text>
<text x="824.6666666666666" y="721" fill="#ffffff" text-anchor="middle" textLength="27" lengthAdjust="spacingAndGlyphs">16:00</text>
<text x="871.3333333333333" y="721" fill="#ffffff" text-anchor="middle" textLength="27" lengthAdjust="spacingAndGlyphs">17:00</text>
<text x="918.0" y="721" fill="#ffffff" text-anchor="middle" textLength="27" lengthAdjust="spacingAndGlyphs">18:00</text>
<text x="964.6666666666666" y="721" fill="#ffffff" text-anchor="middle" textLength="27" lengthAdjust="spacingAndGlyphs">19:00</text>
<text x="1011.3333333333333" y="721" fill="#ffffff" text-anchor="middle" textLength="27" lengthAdjust="spacingAndGlyphs">20:00</text>
<text x="1058.0" y="721" fill="#ffffff" text-anchor="middle" textLength="27" lengthAdjust="spacingAndGlyphs">21:00</text>
<text x="1104.6666666666665" y="721" fill="#ffffff" text-anchor="middle" textLength="27" lengthAdjust="spacingAndGlyphs">22:00</text>
<text x="1151.3333333333333" y="721" fill="#ffffff" text-anchor="middle" textLength="27" lengthAdjust="spacingAndGlyphs">23:00</text>
<text x="1198.0" y="721" fill="#ffffff" text-anchor="middle" textLength="27" lengthAdjust="spacingAndGlyphs">24:00</text>
<text x="631" y="732" fill="#ffffff" textLength="27" lengthAdjust="spacingAndGlyphs">11:43</text>
<text x="1106" y="732" fill="#ffffff" textLength="27" lengthAdjust="spacingAndGlyphs">21:54</text>
<g shape-rendering="crispEdges">
<rect x="619" y="722" width="6" height="6" fill="#ffffff"/>
<rect x="619" y="722" width="1" height="1" fill="#000080"/>
<rect x="624" y="722" width="1" height="1" fill="#000080"/>
<rect x="619" y="727" width="1" height="1" fill="#000080"/>
<rect x="624" y="727" width="1" height="1" fill="#000080"/>
<rect x="626" y="725" width="1" height="1" fill="#ffff00"/>
<rect x="626" y="726" width="1" height="1" fill="#ffff00"/>
<rect x="625" y="727" width="3" height="1" fill="#ffff00"/>
<rect x="625" y="728" width="4" height="1" fill="#ffff00"/>
<rect x="624" y="729" width="5" height="1" fill="#ffff00"/>
<rect x="624" y="730" width="5" height="1" fill="#ffff00"/>
<rect x="625" y="731" width="2" height="1" fill="#ffff00"/>
<rect x="625" y="732" width="2" height="1" fill="#ffff00"/>
<rect x="626" y="724" width="1" height="1" fill="#000000"/>
<rect x="625" y="725" width="1" height="1" fill="#000000"/>
<rect x="625" y="726" width="1" height="1" fill="#000000"/>
<rect x="624" y="727" width="1" height="1" fill="#000000"/>
<rect x="624" y="728" width="1" height="1" fill="#000000"/>
<rect x="623" y="729" width="1" height="1" fill="#000000"/>
<rect x="623" y="730" width="1" height="1" fill="#000000"/>
<rect x="627" y="725" width="1" height="1" fill="#7878d8"/>
<rect x="627" y="726" width="1" height="1" fill="#7878d8"/>
<rect x="628" y="727" width="1" height="1" fill="#7878d8"/>
<rect x="629" y="728" width="1" height="1" fill="#7878d8"/>
<rect x="629" y="729" width="1" height="1" fill="#7878d8"/>
<rect x="629" y="730" width="1" height="1" fill="#7878d8"/>
<rect x="1097" y="722" width="2" height="1" fill="#ffff00"/>
<rect x="1097" y="723" width="2" height="1" fill="#ffff00"/>
<rect x="1095" y="724" width="5" height="1" fill="#ffff00"/>
<rect x="1095" y="725" width="5" height="1" fill="#ffff00"/>
<rect x="1096" y="726" width="3" height="1" fill="#ffff00"/>
<rect x="1096" y="727" width="3" height="1" fill="#ffff00"/>
<rect x="1097" y="728" width="1" height="1" fill="#ffff00"/>
<rect x="1097" y="729" width="1" height="1" fill="#ffff00"/>
<rect x="1100" y="724" width="1" height="1" fill="#000000"/>
<rect x="1100" y="725" width="1" height="1" fill="#000000"/>
<rect x="1099" y="726" width="1" height="1" fill="#000000"/>
<rect x="1099" y="727" width="1" height="1" fill="#000000"/>
<rect x="1098" y="728" width="1" height="1" fill="#000000"/>
<rect x="1098" y="729" width="1" height="1" fill="#000000"/>
<rect x="1097" y="730" width="1" height="1" fill="#000000"/>
<rect x="1094" y="724" width="1" height="1" fill="#7878d8"/>
<rect x="1094" y="725" width="1" height="1" fill="#7878d8"/>
<rect x="1095" y="726" width="1" height="1" fill="#7878d8"/>
<rect x="1095" y="727" width="1" height="1" fill="#7878d8"/>
<rect x="1096" y="728" width="1" height="1" fill="#7878d8"/>
<rect x="1096" y="729" width="1" height="1" fill="#7878d8"/>
<rect x="1100" y="729" width="4" height="1" fill="#ffffff"/>
<rect x="1099" y="730" width="6" height="3" fill="#ffffff"/>
<rect x="1099" y="729" width="1" height="1" fill="#000080"/>
<rect x="1104" y="729" width="1" height="1" fill="#000080"/>
</g>
<g shape-rendering="crispEdges">
<rect x="0" y="737" width="1280" height="1" fill="#ffffff"/>
<rect x="0" y="738" width="1280" height="72" fill="#cffaf6"/>
<rect x="0" y="737" width="1" height="73" fill="#ffffff"/>
<rect x="1279" y="738" width="1" height="72" fill="#808080"/>
<rect x="88" y="738" width="1" height="72" fill="#808080"/>
<rect x="205" y="738" width="1" height="72" fill="#808080"/>
<rect x="323" y="738" width="1" height="72" fill="#808080"/>
<rect x="441" y="738" width="1" height="72" fill="#808080"/>
<rect x="559" y="738" width="1" height="72" fill="#808080"/>
<rect x="677" y="738" width="1" height="72" fill="#808080"/>
<rect x="795" y="738" width="1" height="72" fill="#808080"/>
<rect x="913" y="738" width="1" height="72" fill="#808080"/>
</g>
<text x="9" y="756" fill="#000000" textLength="38" lengthAdjust="spacingAndGlyphs" font-weight="bold">Sensor</text>
<text x="9" y="772" fill="#000000" textLength="46" lengthAdjust="spacingAndGlyphs" font-weight="bold">MinWert</text>
<text x="9" y="788" fill="#000000" textLength="49" lengthAdjust="spacingAndGlyphs" font-weight="bold">MaxWert</text>
<text x="9" y="804" fill="#000000" textLength="71" lengthAdjust="spacingAndGlyphs" font-weight="bold">Durchschnitt</text>
<text x="95" y="756" fill="#000000" textLength="49" lengthAdjust="spacingAndGlyphs" font-weight="bold">Temp. A.</text>
<text x="198" y="756" fill="#000000" text-anchor="end" textLength="12" lengthAdjust="spacingAndGlyphs" font-weight="bold">°C</text>
<text x="101" y="772" fill="#000000" textLength="27" lengthAdjust="spacingAndGlyphs">23:40</text>
<text x="198" y="772" fill="#000000" text-anchor="end" textLength="18" lengthAdjust="spacingAndGlyphs">-1.4</text>
<text x="101" y="788" fill="#000000" textLength="27" lengthAdjust="spacingAndGlyphs">03:54</text>
<text x="198" y="788" fill="#000000" text-anchor="end" textLength="15" lengthAdjust="spacingAndGlyphs">0.3</text>
<text x="198" y="804" fill="#000000" text-anchor="end" textLength="24" lengthAdjust="spacingAndGlyphs">-0.34</text>
<text x="213" y="756" fill="#000000" textLength="46" lengthAdjust="spacingAndGlyphs" font-weight="bold">Temp. I.</text>
<text x="316" y="756" fill="#000000" text-anchor="end" textLength="12" lengthAdjust="spacingAndGlyphs" font-weight="bold">°C</text>
<text x="219" y="772" fill="#000000" textLength="27" lengthAdjust="spacingAndGlyphs">10:05</text>
<text x="316" y="772" fill="#000000" text-anchor="end" textLength="21" lengthAdjust="spacingAndGlyphs">20.3</text>
<text x="219" y="788" fill="#000000" textLength="27" lengthAdjust="spacingAndGlyphs">19:30</text>
<text x="316" y="788" fill="#000000" text-anchor="end" textLength="21" lengthAdjust="spacingAndGlyphs">26.4</text>
<text x="316" y="804" fill="#000000" text-anchor="end" textLength="27" lengthAdjust="spacingAndGlyphs">23.10</text>
<text x="685" y="756" fill="#000000" textLength="54" lengthAdjust="spacingAndGlyphs" font-weight="bold">Luftdruck</text>
<text x="789" y="756" fill="#000000" text-anchor="end" textLength="22" lengthAdjust="spacingAndGlyphs" font-weight="bold">hPa</text>
<text x="690" y="772" fill="#000000" textLength="27" lengthAdjust="spacingAndGlyphs">14:15</text>
<text x="789" y="772" fill="#000000" text-anchor="end" textLength="33" lengthAdjust="spacingAndGlyphs">1020.8</text>
<text x="690" y="788" fill="#000000" textLength="27" lengthAdjust="spacingAndGlyphs">00:00</text>
<text x="789" y="788" fill="#000000" text-anchor="end" textLength="33" lengthAdjust="spacingAndGlyphs">1022.3</text>
<text x="685" y="804" fill="#000000" textLength="51" lengthAdjust="spacingAndGlyphs">^0.5hPa/h</text>
<text x="789" y="804" fill="#000000" text-anchor="end" textLength="33" lengthAdjust="spacingAndGlyphs">1021.5</text>
<text x="803" y="756" fill="#000000" textLength="37" lengthAdjust="spacingAndGlyphs" font-weight="bold">Regen</text>
<text x="906" y="756" fill="#000000" text-anchor="end" textLength="23" lengthAdjust="spacingAndGlyphs" font-weight="bold">l/m²</text>
<text x="809" y="788" fill="#000000" textLength="27" lengthAdjust="spacingAndGlyphs">00:00</text>
<text x="907" y="788" fill="#000000" text-anchor="end" textLength="15" lengthAdjust="spacingAndGlyphs">0.0</text>
<text x="803" y="804" fill="#000000" textLength="38" lengthAdjust="spacingAndGlyphs">Gesamt:</text>
<text x="907" y="804" fill="#000000" text-anchor="end" textLength="15" lengthAdjust="spacingAndGlyphs">0.0</text>
<text x="920" y="756" fill="#000000" textLength="29" lengthAdjust="spacingAndGlyphs" font-weight="bold">Wind</text>
<text x="1022" y="756" fill="#000000" text-anchor="end" textLength="29" lengthAdjust="spacingAndGlyphs" font-weight="bold">km/h</text>
<text x="920" y="772" fill="#000000" textLength="45" lengthAdjust="spacingAndGlyphs">Ø 10 min.</text>
<text x="1023" y="772" fill="#000000" text-anchor="end" textLength="15" lengthAdjust="spacingAndGlyphs">0.0</text>
<text x="927" y="788" fill="#000000" textLength="27" lengthAdjust="spacingAndGlyphs">22:05</text>
<text x="1023" y="788" fill="#000000" text-anchor="end" textLength="43" lengthAdjust="spacingAndGlyphs">S-SO 0.1</text>
<text x="1023" y="804" fill="#000000" text-anchor="end" textLength="15" lengthAdjust="spacingAndGlyphs">0.0</text>
</svg></body></html>
